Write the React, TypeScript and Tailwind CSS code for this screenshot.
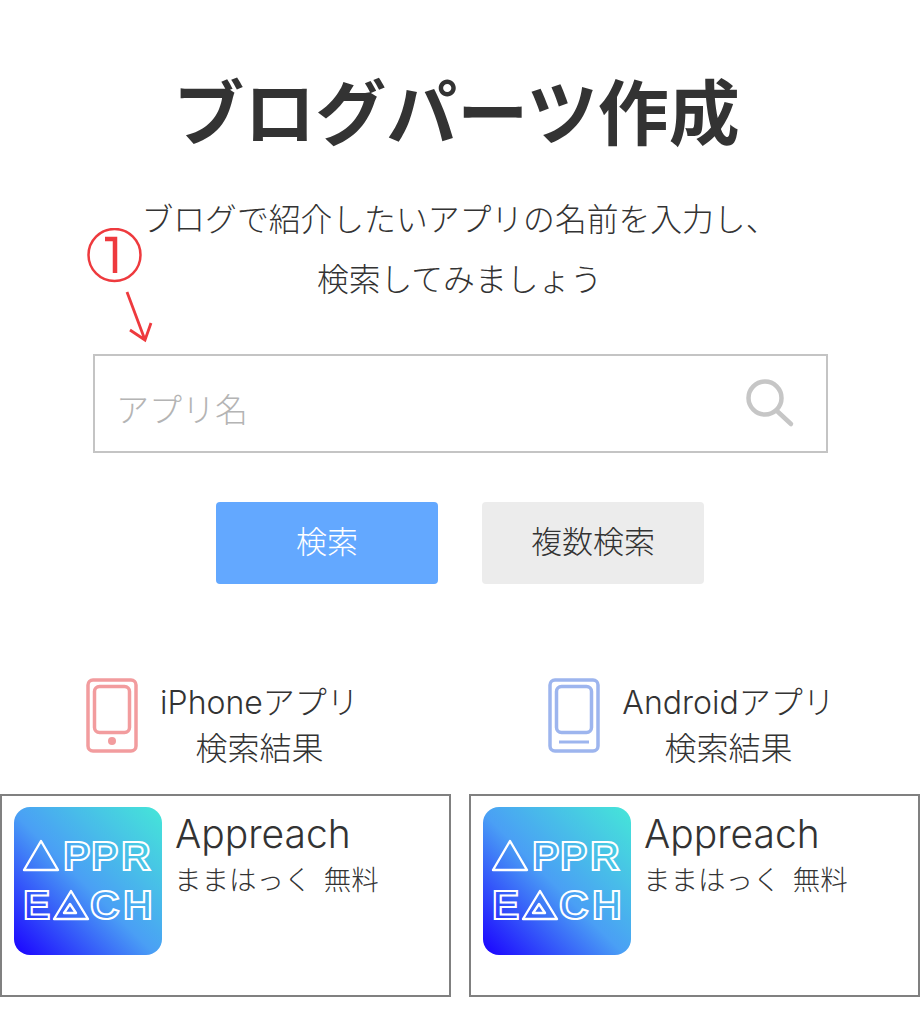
import React from "react";

function Logo() {
  const letter = { fill: "none", stroke: "#fff", strokeWidth: 2, fontFamily: "'Liberation Sans', sans-serif", fontWeight: 700, fontSize: 41 } as const;
  return (
    <div className="w-[148px] h-[148px] rounded-[16px] shrink-0 overflow-hidden bg-[linear-gradient(to_top_right,#1a00ff_0%,#4a9ff5_48%,#45e6d8_100%)]">
      <svg width="148" height="148" viewBox="0 0 148 148" aria-hidden="true">
        <g fill="none" stroke="#fff" strokeWidth="2.4" strokeLinejoin="round">
          <polygon points="10,63 27,34 44,63" />
          <polygon points="40,112 57,84 74,112" />
          <polygon points="50,106 56,97 62,106" />
        </g>
        <text x="49" y="63" style={letter}>P</text>
        <text x="77" y="63" style={letter}>P</text>
        <text x="107" y="63" style={letter}>R</text>
        <text x="9" y="112" style={letter}>E</text>
        <text x="76" y="112" style={letter}>C</text>
        <text x="109" y="112" style={letter}>H</text>
      </svg>
    </div>
  );
}

function Card() {
  return (
    <div className="h-[203px] border-2 border-[#808080] flex pl-[12px] pt-[11px] gap-[13px]">
      <Logo />
      <div className="text-[#333]">
        <div className="font-['Inter','Noto_Sans_CJK_JP',sans-serif] font-light text-[39px] leading-[44px] mt-[5px]">Appreach</div>
        <div className="text-[27.5px] leading-[30px] mt-[7px] ml-[-1px] font-light whitespace-pre">ままはっく  無料</div>
      </div>
    </div>
  );
}

function Column({ label, color, android }: { label: string; color: string; android?: boolean }) {
  return (
    <div>
      <div className="h-[115px] flex justify-center items-start gap-[22px] pr-[6px] text-[#333]">
        <svg width="52" height="76" viewBox="0 0 52 76" fill="none" stroke={color} strokeWidth="3.5" className="mt-[-1px]" aria-hidden="true">
          <rect x="2" y="2" width="48" height="71" rx="5" />
          <rect x="8.5" y="8.5" width="35" height="46" rx="5" />
          {android ? (
            <line x1="11" y1="64" x2="41" y2="64" strokeWidth="3" />
          ) : (
            <circle cx="26" cy="63" r="4" fill={color} stroke="none" />
          )}
        </svg>
        <div className="text-center font-['Inter','Noto_Sans_CJK_JP',sans-serif] text-[32px] leading-[46px] font-light mt-[1px]">
          <div>{label}</div>
          <div>検索結果</div>
        </div>
      </div>
      <Card />
    </div>
  );
}

export default function App() {
  return (
    <div className="relative w-[921px] h-[1024px] bg-white overflow-hidden font-['Noto_Sans_CJK_JP','Noto_Sans',sans-serif] text-[#333]">
      <h1 className="pt-[66px] pr-[8px] text-center text-[71px] leading-[84px] font-bold">ブログパーツ作成</h1>
      <div className="mt-[37px] pr-[2px] text-center text-[31.8px] leading-[60px] font-light">
        <p>ブログで紹介したいアプリの名前を入力し、</p>
        <p>検索してみましょう</p>
      </div>
      <div className="mx-[93px] mt-[47px] h-[99px] border-2 border-[#c4c4c4] flex items-center justify-between pl-[21px] pr-[31px] text-[#b4b4b4]">
        <span className="text-[33px] font-light mt-[11px]">アプリ名</span>
        <svg width="52" height="52" viewBox="0 0 52 52" fill="none" stroke="#c6c6c6" strokeWidth="4.5" strokeLinecap="round" aria-hidden="true">
          <circle cx="22" cy="20" r="16.5" />
          <line x1="34" y1="33" x2="48" y2="46" />
        </svg>
      </div>
      <div className="mt-[49px] flex justify-center gap-[44px] pr-[1px] text-[31px] font-light">
        <button className="w-[222px] h-[82px] rounded-[4px] bg-[#63a8ff] text-white pb-[6px]">検索</button>
        <button className="w-[222px] h-[82px] rounded-[4px] bg-[#ececec] text-[#333] pb-[6px]">複数検索</button>
      </div>
      <div className="mt-[95px] grid grid-cols-[451px_451px] gap-[18px]">
        <Column label="iPhoneアプリ" color="#f29c9e" />
        <Column label="Androidアプリ" color="#9db5ee" android />
      </div>
      <svg className="absolute left-[84px] top-[228px]" width="70" height="116" viewBox="0 0 70 116" fill="none" stroke="#ee3a3e" aria-hidden="true">
        <circle cx="30.5" cy="27" r="26" strokeWidth="2.5" />
        <path d="M21 11 H31 V45" strokeWidth="4.5" />
        <path d="M43 64 L61 112 M46 102 L61 112 L67 95" strokeWidth="2.8" />
      </svg>
    </div>
  );
}
